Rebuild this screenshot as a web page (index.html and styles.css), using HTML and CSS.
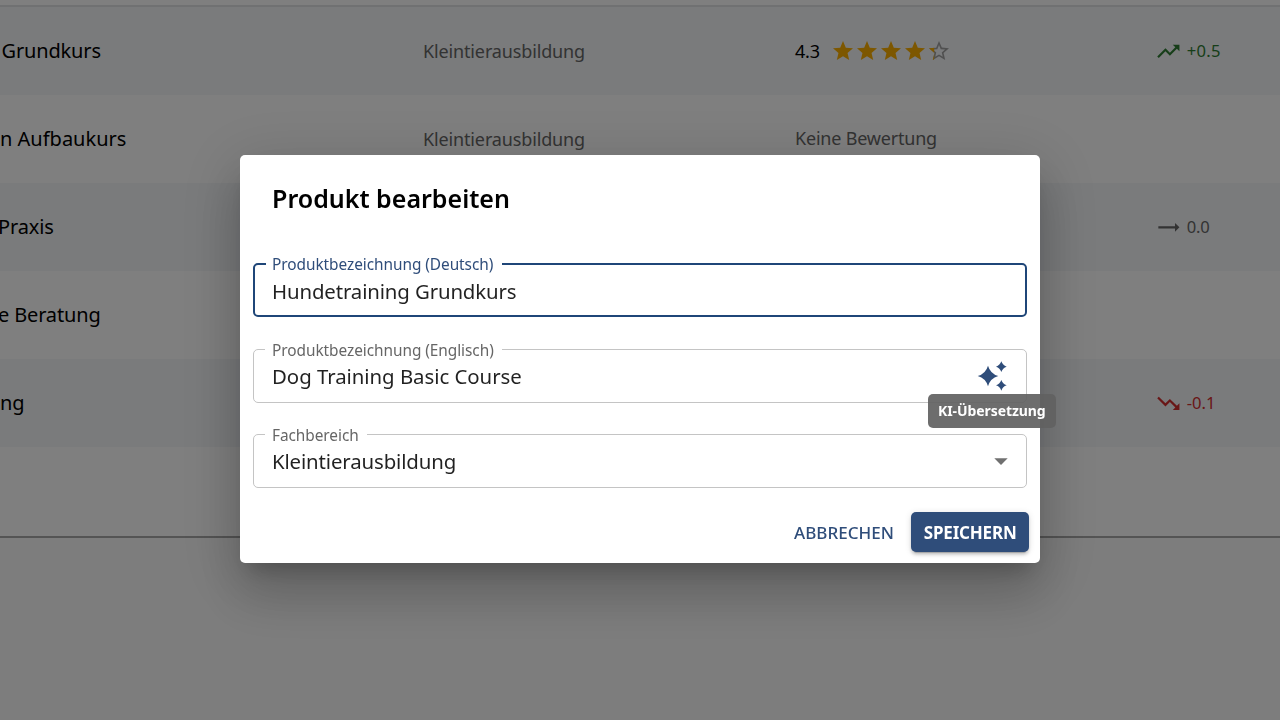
FILE: index.html
```html
<!DOCTYPE html>
<html lang="de">
<head>
<meta charset="utf-8">
<title>Produkt bearbeiten</title>
<link rel="stylesheet" href="styles.css">
</head>
<body>
<main class="table">
  <div class="row row--shaded">
    <div class="cell cell--name cell--inset">Grundkurs</div>
    <div class="cell cell--area">Kleintierausbildung</div>
    <div class="cell cell--rating"><span class="score">4.3</span>
      <span class="stars">
        <svg class="star" viewBox="0 0 24 24"><use href="#star"/></svg><svg class="star" viewBox="0 0 24 24"><use href="#star"/></svg><svg class="star" viewBox="0 0 24 24"><use href="#star"/></svg><svg class="star" viewBox="0 0 24 24"><use href="#star"/></svg><svg class="star" viewBox="0 0 24 24"><use class="star-outline" href="#star-border"/><use href="#star" clip-path="url(#partial)"/></svg>
      </span>
    </div>
    <div class="cell cell--trend up"><svg class="trend" viewBox="0 0 24 24"><path d="m16 6 2.29 2.29-4.88 4.88-4-4L2 16.59 3.41 18l6-6 4 4 6.3-6.29L22 12V6z"/></svg><span class="delta">+0.5</span></div>
  </div>
  <div class="row">
    <div class="cell cell--name cell--wide">n Aufbaukurs</div>
    <div class="cell cell--area">Kleintierausbildung</div>
    <div class="cell cell--rating muted">Keine Bewertung</div>
    <div class="cell cell--trend"></div>
  </div>
  <div class="row row--shaded">
    <div class="cell cell--name cell--cut">Praxis</div>
    <div class="cell cell--area"></div>
    <div class="cell cell--rating"></div>
    <div class="cell cell--trend flat"><svg class="trend" viewBox="0 0 24 24"><path d="m22 12-4-4v3H3v2h15v3z"/></svg><span class="delta">0.0</span></div>
  </div>
  <div class="row">
    <div class="cell cell--name cell--cut">e Beratung</div>
  </div>
  <div class="row row--shaded">
    <div class="cell cell--name">ng</div>
    <div class="cell cell--area"></div>
    <div class="cell cell--rating"></div>
    <div class="cell cell--trend down"><svg class="trend" viewBox="0 0 24 24"><path d="m16 18 2.29-2.29-4.88-4.88-4 4L2 7.41 3.41 6l6 6 4-4 6.3 6.29L22 12v6z"/></svg><span class="delta">-0.1</span></div>
  </div>
  <div class="row"></div>
</main>

<div class="backdrop">
  <section class="dialog" role="dialog" aria-modal="true">
    <h2 class="title">Produkt bearbeiten</h2>
    <div class="fields">
      <div class="field field--focused">
        <label class="label">Produktbezeichnung (Deutsch)</label>
        <span class="value">Hundetraining Grundkurs</span>
      </div>
      <div class="field">
        <label class="label">Produktbezeichnung (Englisch)</label>
        <span class="value value--loose">Dog Training Basic Course</span>
        <button class="ai" aria-label="KI-Übersetzung"><svg viewBox="0 0 24 24"><path d="M9 4.300Q10.700 10.300 16.700 12Q10.700 13.700 9 19.700Q7.300 13.700 1.300 12Q7.300 10.300 9 4.300z"/><path d="M19 1Q20 4 23 5Q20 6 19 9Q18 6 15 5Q18 4 19 1z"/><path d="M19 15Q20 18 23 19Q20 20 19 23Q18 20 15 19Q18 18 19 15z"/></svg></button>
        <div class="tooltip" role="tooltip">KI-Übersetzung</div>
      </div>
      <div class="field">
        <label class="label">Fachbereich</label>
        <span class="value">Kleintierausbildung</span>
        <svg class="caret" viewBox="0 0 24 24"><path d="m7 10 5 5 5-5z"/></svg>
      </div>
    </div>
    <div class="actions">
      <button class="btn">ABBRECHEN</button>
      <button class="btn btn--primary">SPEICHERN</button>
    </div>
  </section>
</div>

<svg class="defs" aria-hidden="true">
  <defs>
    <path id="star" d="M12 17.27 18.18 21l-1.64-7.03L22 9.24l-7.19-.61L12 2 9.19 8.63 2 9.24l5.46 4.73L5.82 21z"/>
    <path id="star-border" d="m22 9.24-7.19-.62L12 2 9.19 8.63 2 9.24l5.46 4.73L5.82 21 12 17.27 18.18 21l-1.63-7.03L22 9.24zM12 15.4l-3.76 2.27 1-4.28-3.32-2.88 4.38-.38L12 6.1l1.71 4.04 4.38.38-3.32 2.88 1 4.28L12 15.4z"/>
    <clipPath id="partial"><rect width="7.2" height="24"/></clipPath>
  </defs>
</svg>
</body>
</html>
```
FILE: styles.css
```css
* { box-sizing: border-box; }

body {
  margin: 0;
  height: 720px;
  overflow: hidden;
  background: #fafafa;
  color: rgba(0, 0, 0, 0.87);
  font-family: "Noto Sans", "Open Sans", sans-serif;
}

.defs { position: absolute; width: 0; height: 0; }

/* Product table */
.table {
  height: 538px;
  padding-top: 5px;
  background: #fff;
  border-bottom: 2px solid #a8a8a8;
}

.row {
  display: grid;
  grid-template-columns: 423px 372px 360px 1fr;
  align-items: center;
  height: 88px;
  white-space: nowrap;
}

.row--shaded { background: #f4f6f9; }
.row:first-child { height: 90px; border-top: 2px solid #e0e2e4; }

.cell { display: flex; align-items: center; }
.cell--name { padding-bottom: 1px; font-size: 20px; letter-spacing: -0.15px; color: #000; }
.cell--inset { padding-left: 1.5px; }
.cell--wide { letter-spacing: 0; }
.cell--cut { margin-left: -2px; }
.cell--area { padding-bottom: 1px; font-size: 18px; letter-spacing: -0.14px; color: #666; }
.cell--rating { font-size: 18px; letter-spacing: -0.2px; }
.muted { padding-bottom: 2px; color: #666; }

.score { padding-bottom: 1px; color: #000; }
.stars { display: flex; margin-left: 11.5px; }
.star { width: 24px; height: 24px; fill: #faaf00; }
.star-outline { fill: #a0a0a0; }

.cell--trend { gap: 5.5px; font-size: 16.6px; }
.trend { width: 26.67px; height: 26.67px; margin-left: -0.5px; fill: currentColor; }
.delta { padding-bottom: 2px; }
.up { color: #2e7d32; letter-spacing: 0.3px; }
.flat { color: #666; letter-spacing: -0.2px; }
.down { color: #d32f2f; }

/* Modal */
.backdrop {
  position: fixed;
  inset: 0;
  display: flex;
  align-items: center;
  justify-content: center;
  padding-bottom: 3px;
  background: rgba(0, 0, 0, 0.5);
}

.dialog {
  width: 800px;
  height: 408px;
  padding: 25px 13.5px 0 13px;
  border-radius: 5px;
  background: #fff;
  box-shadow: 0 15px 20px -9px rgba(0, 0, 0, 0.2), 0 32px 51px 4px rgba(0, 0, 0, 0.14), 0 12px 61px 11px rgba(0, 0, 0, 0.12);
}

.title {
  margin: 0 0 0 19px;
  height: 36px;
  font-size: 25px;
  line-height: 36px;
  font-weight: 600;
  color: #000;
}

.fields {
  display: flex;
  flex-direction: column;
  gap: 31.5px;
  margin-top: 47.5px;
}

.field {
  position: relative;
  display: flex;
  align-items: center;
  height: 54px;
  padding: 0 11px 0 18px;
  border: 1.34px solid #c4c4c4;
  border-radius: 5px;
}

.field--focused { border: 2.67px solid #1f4678; padding: 2px 11px 0 17px; }

.label {
  position: absolute;
  left: 11px;
  top: -9px;
  height: 20px;
  padding: 0 8px 0 7px;
  background: #fff;
  font-size: 15.4px;
  letter-spacing: -0.05px;
  line-height: 20px;
  color: #666;
  white-space: nowrap;
}

.field--focused .label { left: 11px; top: -10px; padding: 0 9px 0 6px; color: #2f4d7a; }

.value { flex: 1; font-size: 20.4px; letter-spacing: -0.13px; white-space: nowrap; }
.value--loose { letter-spacing: -0.04px; }

.ai {
  display: flex;
  padding: 0;
  margin: 0 6.5px 0 0;
  border: 0;
  background: none;
  fill: #2f4d7a;
}

.ai svg { width: 32px; height: 32px; }
.caret { width: 32px; height: 32px; fill: #707070; margin-right: -2.5px; }

.tooltip {
  position: absolute;
  left: 674px;
  top: 44.5px;
  z-index: 2;
  height: 33.5px;
  padding: 0 10px;
  border-radius: 5px;
  background: rgba(97, 97, 97, 0.92);
  color: #fff;
  font-size: 14px;
  letter-spacing: -0.08px;
  font-weight: 700;
  line-height: 33px;
  white-space: nowrap;
}

.actions {
  display: flex;
  justify-content: flex-end;
  gap: 5px;
  margin: 24px -2.5px 0 0;
}

.btn {
  height: 40px;
  padding: 1px 12.5px 0;
  border: 0;
  border-radius: 5px;
  background: none;
  color: #2f4d7a;
  font: 500 17px/39px "Noto Sans", "Open Sans", sans-serif;
}

.btn--primary {
  background: #2f4d7a;
  color: #fff;
  font-weight: 700;
  letter-spacing: -0.2px;
  box-shadow: 0 4px 1px -3px rgba(0, 0, 0, 0.2), 0 3px 3px rgba(0, 0, 0, 0.14), 0 1px 7px rgba(0, 0, 0, 0.12);
}
```
